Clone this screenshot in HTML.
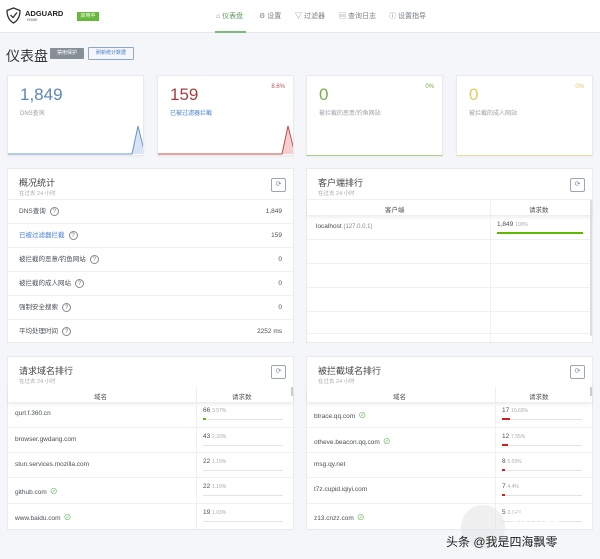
<!DOCTYPE html>
<html><head><meta charset="utf-8"><style>
*{box-sizing:border-box;margin:0;padding:0}
body{width:600px;height:559px;background:#f4f6f9;font-family:"Liberation Sans","Noto Sans CJK SC",sans-serif;color:#495057;position:relative;overflow:hidden;font-size:7px}
.hdr{position:absolute;left:0;top:0;width:600px;height:33px;background:#fff;border-bottom:1px solid #e6e8ec}
.abs{position:absolute}
.nav{position:absolute;top:11px;font-size:7px;color:#7a8088}
.card{position:absolute;background:#fff;border:1px solid #e8eaee;box-shadow:0 1px 2px rgba(0,0,0,.04);overflow:hidden}
.big{position:absolute;left:12px;top:9px;font-size:17px}
.lab{position:absolute;left:12px;top:32px;font-size:6px;color:#9aa0a6}
.pct{position:absolute;right:8px;top:8px;font-size:6px}
.panel{position:absolute;background:#fff;border:1px solid #e8eaee}
.pt{position:absolute;left:11px;top:7px;font-size:9px;color:#444}
.ps{position:absolute;left:11px;top:20px;font-size:5.5px;color:#aaa}
.rf{position:absolute;width:15px;height:14px;border:1px solid #9aa7b5;border-radius:2px;font-size:7px;color:#7a8a9a;text-align:center;line-height:12px}
.row{position:absolute;left:0;right:0;border-bottom:1px solid #eef0f2;font-size:6.5px}
.q{display:inline-block;width:9px;height:9px;border:1px solid #888;border-radius:50%;font-size:6px;text-align:center;line-height:8px;margin-left:4px;color:#777;vertical-align:middle}
.th{position:absolute;left:0;right:0;height:16px;box-shadow:0 2px 3px rgba(0,0,0,.06);border-bottom:1px solid #eee;font-size:6.5px;color:#555}
.bar{position:absolute;height:1px;background:#e2e4e8}
.eye{color:#5cb85c;font-size:8px;margin-left:3px}
</style></head><body>
<div class="hdr">
<svg class="abs" style="left:6px;top:7px" width="15" height="17" viewBox="0 0 15 17"><path d="M7.5 1 L14 3.5 C14 10 11 14 7.5 16 C4 14 1 10 1 3.5 Z" fill="none" stroke="#333" stroke-width="1.3"/><path d="M4.5 8 L7 10.5 L11 5.5" fill="none" stroke="#333" stroke-width="1.3"/></svg>
<div class="abs" style="left:25px;top:9px;font-size:7.5px;font-weight:bold;color:#222">ADGUARD</div>
<div class="abs" style="left:27px;top:18px;font-size:3.5px;color:#555">HOME</div>
<div class="abs" style="left:77px;top:12px;width:22px;height:9px;background:#67b93e;color:#fff;font-size:5px;text-align:center;line-height:9px">启用中</div>
<div class="nav" style="left:216px;color:#5a9a5a">⌂ 仪表盘</div>
<div class="abs" style="left:215px;top:31px;width:31px;height:2px;background:#7cb87c"></div>
<div class="nav" style="left:259px">⚙ 设置</div>
<div class="nav" style="left:295px">▽ 过滤器</div>
<div class="nav" style="left:339px">▤ 查询日志</div>
<div class="nav" style="left:389px">ⓘ 设置指导</div>
</div>
<div class="abs" style="left:6px;top:46px;font-size:14px;color:#333">仪表盘</div>
<div class="abs" style="left:50px;top:48px;width:34px;height:11px;background:#868e96;color:#fff;font-size:5px;text-align:center;line-height:11px;border-radius:1px">禁用保护</div>
<div class="abs" style="left:88px;top:47px;width:46px;height:13px;border:1px solid #8fa8c8;color:#467fcf;font-size:5px;text-align:center;line-height:11px;border-radius:1px">刷新统计数据</div>

<div class="card" style="left:7px;top:75px;width:137px;height:81px"><div class="big" style="color:#5d86b5">1,849</div><div class="lab">DNS查询</div>
<svg class="abs" style="left:0;bottom:0" width="137" height="40"><path d="M0 39 L124 39 L130 11 L137 39 Z" fill="#d6e4f5"/><path d="M0 39 L124 39 L130 11 L137 39" fill="none" stroke="#6a94c8" stroke-width="1"/></svg></div>
<div class="card" style="left:157px;top:75px;width:137px;height:81px"><div class="big" style="color:#a5403f">159</div><div class="lab" style="color:#467fcf">已被过滤器拦截</div><div class="pct" style="color:#b55">8.6%</div>
<svg class="abs" style="left:0;bottom:0" width="137" height="40"><path d="M0 39 L124 39 L130 11 L137 39 Z" fill="#f6d0d0"/><path d="M0 39 L124 39 L130 11 L137 39" fill="none" stroke="#c44" stroke-width="1"/></svg></div>
<div class="card" style="left:306px;top:75px;width:137px;height:81px;border-bottom:1px solid #a8d08a"><div class="big" style="color:#7aab4a">0</div><div class="lab">被拦截的恶意/钓鱼网站</div><div class="pct" style="color:#7aab4a">0%</div></div>
<div class="card" style="left:456px;top:75px;width:137px;height:81px;border-bottom:1px solid #e8e0a0"><div class="big" style="color:#e0cc60">0</div><div class="lab">被拦截的成人网站</div><div class="pct" style="color:#e0cc60">0%</div></div>

<div class="panel" style="left:7px;top:168px;width:287px;height:175px">
<div class="pt">概况统计</div><div class="ps">在过去 24 小时</div><div class="rf" style="left:263px;top:9px">⟳</div>
<div class="row" style="top:0;height:31px"></div>
<div class="row" style="top:31px;height:24px;line-height:24px;padding:0 11px">DNS查询<span class="q">?</span><span style="float:right">1,849</span></div>
<div class="row" style="top:55px;height:24px;line-height:24px;padding:0 11px;color:#467fcf">已被过滤器拦截<span class="q">?</span><span style="float:right;color:#495057">159</span></div>
<div class="row" style="top:79px;height:24px;line-height:24px;padding:0 11px">被拦截的恶意/钓鱼网站<span class="q">?</span><span style="float:right">0</span></div>
<div class="row" style="top:103px;height:24px;line-height:24px;padding:0 11px">被拦截的成人网站<span class="q">?</span><span style="float:right">0</span></div>
<div class="row" style="top:127px;height:24px;line-height:24px;padding:0 11px">强制安全搜索<span class="q">?</span><span style="float:right">0</span></div>
<div class="row" style="top:151px;height:24px;line-height:24px;padding:0 11px;border:0">平均处理时间<span class="q">?</span><span style="float:right">2252 ms</span></div>
</div>

<div class="panel" style="left:306px;top:168px;width:287px;height:175px">
<div class="pt">客户端排行</div><div class="ps">在过去 24 小时</div><div class="rf" style="left:263px;top:9px">⟳</div>
<div class="row" style="top:0;height:31px"></div>
<div class="th" style="top:31px"><span class="abs" style="left:78px;top:4px">客户端</span><span class="abs" style="left:222px;top:4px">请求数</span></div>
<div class="abs" style="left:183px;top:31px;width:1px;height:144px;background:#eef0f2"></div>
<div class="row" style="top:47px;height:24px"><span class="abs" style="left:9px;top:7px">localhost <span style="color:#888;font-size:6px">(127.0.0.1)</span></span><span class="abs" style="left:190px;top:5px">1,849 <span style="color:#aaa;font-size:5px">100%</span></span><div class="abs" style="left:190px;top:16px;width:86px;height:2px;background:#5eba00"></div></div>
<div class="row" style="top:71px;height:24px"></div><div class="row" style="top:95px;height:24px"></div><div class="row" style="top:119px;height:24px"></div><div class="row" style="top:143px;height:22px"></div>
<div class="abs" style="left:283px;top:31px;width:2px;height:136px;background:#ddd"></div>
</div>

<div class="panel" style="left:7px;top:356px;width:287px;height:174px">
<div class="pt">请求域名排行</div><div class="ps">在过去 24 小时</div><div class="rf" style="left:263px;top:8px">⟳</div>
<div class="th" style="top:30px"><span class="abs" style="left:86px;top:4px">域名</span><span class="abs" style="left:224px;top:4px">请求数</span></div>
<div class="abs" style="left:188px;top:30px;width:1px;height:144px;background:#eef0f2"></div>
<div class="abs" style="left:283px;top:30px;width:2px;height:9px;background:#ccc"></div>
<div class="row" style="top:46px;height:25px"><span class="abs" style="left:7px;top:7px">qurl.f.360.cn</span><span class="abs" style="left:195px;top:4px">66 <span style="color:#aaa;font-size:5px">3.57%</span></span><div class="bar" style="left:195px;top:16px;width:80px"></div><div class="abs" style="left:195px;top:15px;width:3px;height:2px;background:#5eba00"></div></div>
<div class="row" style="top:71px;height:25px"><span class="abs" style="left:7px;top:8px">browser.gwdang.com</span><span class="abs" style="left:195px;top:5px">43 <span style="color:#aaa;font-size:5px">2.33%</span></span><div class="bar" style="left:195px;top:17px;width:80px"></div></div>
<div class="row" style="top:96px;height:25px"><span class="abs" style="left:7px;top:8px">stun.services.mozilla.com</span><span class="abs" style="left:195px;top:5px">22 <span style="color:#aaa;font-size:5px">1.19%</span></span><div class="bar" style="left:195px;top:17px;width:80px"></div></div>
<div class="row" style="top:121px;height:26px"><span class="abs" style="left:7px;top:8px">github.com<span class="eye">⊘</span></span><span class="abs" style="left:195px;top:5px">22 <span style="color:#aaa;font-size:5px">1.19%</span></span><div class="bar" style="left:195px;top:17px;width:80px"></div></div>
<div class="row" style="top:147px;height:26px;border:0"><span class="abs" style="left:7px;top:8px">www.baidu.com<span class="eye">⊘</span></span><span class="abs" style="left:195px;top:5px">19 <span style="color:#aaa;font-size:5px">1.03%</span></span><div class="bar" style="left:195px;top:17px;width:80px"></div></div>
</div>

<div class="panel" style="left:306px;top:356px;width:287px;height:174px">
<div class="pt">被拦截域名排行</div><div class="ps">在过去 24 小时</div><div class="rf" style="left:263px;top:8px">⟳</div>
<div class="th" style="top:30px"><span class="abs" style="left:86px;top:4px">域名</span><span class="abs" style="left:222px;top:4px">请求数</span></div>
<div class="abs" style="left:188px;top:30px;width:1px;height:144px;background:#eef0f2"></div>
<div class="abs" style="left:283px;top:30px;width:2px;height:9px;background:#ccc"></div>
<div class="row" style="top:46px;height:25px"><span class="abs" style="left:7px;top:7px">btrace.qq.com<span class="eye">⊘</span></span><span class="abs" style="left:195px;top:4px">17 <span style="color:#aaa;font-size:5px">10.69%</span></span><div class="bar" style="left:195px;top:16px;width:80px"></div><div class="abs" style="left:195px;top:15px;width:8px;height:2px;background:#cd201f"></div></div>
<div class="row" style="top:71px;height:25px"><span class="abs" style="left:7px;top:8px">otheve.beacon.qq.com<span class="eye">⊘</span></span><span class="abs" style="left:195px;top:5px">12 <span style="color:#aaa;font-size:5px">7.55%</span></span><div class="bar" style="left:195px;top:17px;width:80px"></div><div class="abs" style="left:195px;top:16px;width:6px;height:2px;background:#cd201f"></div></div>
<div class="row" style="top:96px;height:25px"><span class="abs" style="left:7px;top:8px">msg.qy.net</span><span class="abs" style="left:195px;top:5px">8 <span style="color:#aaa;font-size:5px">5.03%</span></span><div class="bar" style="left:195px;top:17px;width:80px"></div><div class="abs" style="left:195px;top:16px;width:3px;height:2px;background:#cd201f"></div></div>
<div class="row" style="top:121px;height:26px"><span class="abs" style="left:7px;top:8px">t7z.cupid.iqiyi.com</span><span class="abs" style="left:195px;top:5px">7 <span style="color:#aaa;font-size:5px">4.4%</span></span><div class="bar" style="left:195px;top:17px;width:80px"></div><div class="abs" style="left:195px;top:16px;width:3px;height:2px;background:#cd201f"></div></div>
<div class="row" style="top:147px;height:26px;border:0"><span class="abs" style="left:7px;top:8px">z13.cnzz.com<span class="eye">⊘</span></span><span class="abs" style="left:195px;top:5px">5 <span style="color:#aaa;font-size:5px">3.14%</span></span><div class="bar" style="left:195px;top:17px;width:80px"></div></div>
</div>

<div class="abs" style="left:461px;top:505px;width:44px;height:44px;border-radius:50%;background:rgba(225,225,225,.5)"></div>
<div class="abs" style="left:512px;top:505px;font-size:16px;color:rgba(255,255,255,.85);font-weight:bold">路由器</div>
<div class="abs" style="left:446px;top:533px;font-size:12px;color:#222">头条 @我是四海飘零</div>
</body></html>
